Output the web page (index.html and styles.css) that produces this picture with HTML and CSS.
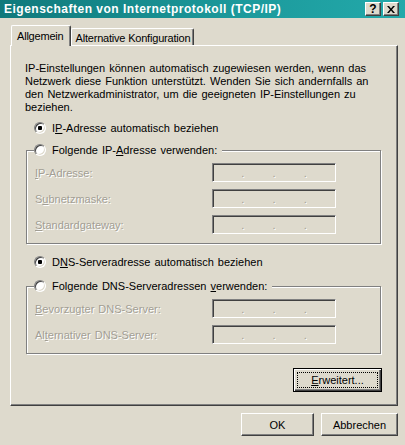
FILE: index.html
```html
<!DOCTYPE html>
<html>
	<head>
		<title>Eigenschaften von Internetprotokoll (TCP/IP)</title>
		<link rel="stylesheet" href="styles.css">
	</head>
	<body>
		<div class="window">
			<div class="titlebar">
				<span class="title">Eigenschaften von Internetprotokoll (TCP/IP)</span>
				<div class="caption-btns">
					<span class="cbtn help">?</span>
					<span class="cbtn close">
						<svg width="8" height="7" viewBox="0 0 8 7"><path d="M0 0h2l2 2.5L6 0h2L5 3.5 8 7H6L4 4.5 2 7H0l3-3.5z" fill="#000"/></svg>
					</span>
				</div>
			</div>
			<div class="client">
				<div class="tabs">
					<div class="tab active">Allgemein</div>
					<div class="tab">Alternative Konfiguration</div>
				</div>
				<div class="panel">
					<p class="intro">IP-Einstellungen können automatisch zugewiesen werden, wenn das<br>Netzwerk diese Funktion unterstützt. Wenden Sie sich andernfalls an<br>den Netzwerkadministrator, um die geeigneten IP-Einstellungen zu<br>beziehen.</p>
					<div class="option first"><span class="radio checked"></span><span>I<u>P</u>-Adresse automatisch beziehen</span></div>
					<fieldset class="group">
						<legend><span class="option"><span class="radio"></span><span>Folgende IP-<u>A</u>dresse verwenden:</span></span></legend>
						<div class="field"><span class="lbl"><u>I</u>P-Adresse:</span><span class="ipbox"><i>.</i><i>.</i><i>.</i></span></div>
						<div class="field"><span class="lbl">S<u>u</u>bnetzmaske:</span><span class="ipbox"><i>.</i><i>.</i><i>.</i></span></div>
						<div class="field"><span class="lbl"><u>S</u>tandardgateway:</span><span class="ipbox"><i>.</i><i>.</i><i>.</i></span></div>
					</fieldset>
					<div class="option second"><span class="radio checked"></span><span>D<u>N</u>S-Serveradresse automatisch beziehen</span></div>
					<fieldset class="group dns">
						<legend><span class="option"><span class="radio"></span><span>Folgende DNS-Serveradressen <u>v</u>erwenden:</span></span></legend>
						<div class="field"><span class="lbl"><u>B</u>evorzugter DNS-Server:</span><span class="ipbox"><i>.</i><i>.</i><i>.</i></span></div>
						<div class="field"><span class="lbl">Al<u>t</u>ernativer DNS-Server:</span><span class="ipbox"><i>.</i><i>.</i><i>.</i></span></div>
					</fieldset>
					<div class="panel-foot">
						<button class="btn default"><span class="focus"><span><u>E</u>rweitert...</span></span></button>
					</div>
				</div>
				<div class="dialog-btns">
					<button class="btn ok">OK</button>
					<button class="btn cancel">Abbrechen</button>
				</div>
			</div>
		</div>
	</body>
</html>
```
FILE: styles.css
```css
body {margin:0;background-color:#dedacd;font-family:"Liberation Sans",Arial,sans-serif;font-size:11px;color:#000;}
.window {width:405px;height:445px;display:flex;flex-direction:column;}

/* title bar */
.titlebar {height:18px;display:flex;align-items:center;justify-content:space-between;background:linear-gradient(to right,#10797b,#1c9a9c 60%,#23a9aa);padding-left:4px;}
.title {color:#fff;font-weight:bold;font-size:12px;letter-spacing:0.5px;}
.caption-btns {display:flex;gap:2px;margin-right:6px;}
.cbtn {width:14px;height:12px;display:flex;align-items:center;justify-content:center;background-color:#dedacd;border:1px solid;border-color:#fff #404040 #404040 #fff;box-shadow:inset -1px -1px 0 #808080;font-weight:bold;font-size:12px;line-height:12px;}

/* client area */
.client {display:flex;flex-direction:column;padding:0 7px 0 10px;}
.tabs {display:flex;align-items:flex-end;margin-top:7px;padding-left:1px;}
.tab {height:17px;padding:2px 3px 0 4px;box-sizing:border-box;line-height:14px;letter-spacing:-0.2px;border-top:1px solid #fff;border-left:1px solid #fff;border-right:1px solid #404040;box-shadow:inset -1px 0 0 #808080;border-radius:2px 2px 0 0;white-space:nowrap;}
.tab.active {height:21px;margin-bottom:-1px;padding:3px 6px 0 5px;background-color:#dedacd;position:relative;z-index:1;}
.panel {height:361px;box-sizing:border-box;display:flex;flex-direction:column;padding:0 14px 13px 14px;word-spacing:1px;border-top:1px solid #fff;border-left:1px solid #fff;border-right:1px solid #404040;border-bottom:1px solid #404040;box-shadow:inset -1px -1px 0 #808080;}
.intro {margin:16px 0 0 0;line-height:13px;white-space:nowrap;}

/* radio options */
.option {display:flex;align-items:center;line-height:14px;white-space:nowrap;}
.option.first {margin:7px 0 0 9px;}
.option.second {margin:11px 0 0 9px;}
.radio {width:12px;height:12px;box-sizing:border-box;margin-right:6px;border-radius:50%;border:1px solid;border-color:#808080 #fff #fff #808080;background-color:#fff;box-shadow:inset 1px 1px 0 #404040,inset -1px -1px 0 #dedacd;}
.radio.checked {background:radial-gradient(circle,#000 0,#000 2px,#fff 2.5px);}

/* group boxes */
.group {margin:8px 2px 0 1px;padding:6px 8px 9px 8px;border:1px solid #808080;box-shadow:inset 1px 1px 0 #fff,1px 1px 0 #fff;}
.group.dns {margin-top:10px;}
.group legend {padding:0 5px 0 0;margin-left:-1px;background-color:#dedacd;}
.field {display:flex;align-items:center;height:19px;}
.field + .field {margin-top:7px;}
.lbl {width:177px;color:#a29e94;text-shadow:1px 1px 0 #fff;}
.ipbox {width:124px;height:19px;box-sizing:border-box;display:flex;justify-content:space-evenly;align-items:flex-end;border:1px solid;border-color:#808080 #fff #fff #808080;box-shadow:inset 1px 1px 0 #404040,inset -1px -1px 0 #dedacd;}
.ipbox i {font-style:normal;color:#a29e94;text-shadow:1px 1px 0 #fff;line-height:15px;}

/* buttons */
.btn {font-family:inherit;font-size:11px;color:#000;height:23px;padding:0;background-color:#dedacd;border:1px solid;border-color:#fff #404040 #404040 #fff;box-shadow:inset -1px -1px 0 #808080;}
.panel-foot {margin-top:auto;display:flex;justify-content:flex-end;padding-right:1px;}
.btn.default {width:89px;height:24px;border:1px solid #000;box-shadow:inset 1px 1px 0 #fff,inset -1px -1px 0 #404040,inset -2px -2px 0 #808080;padding:3px;}
.focus {display:flex;align-items:center;justify-content:center;height:100%;box-sizing:border-box;border:1px dotted #000;}
.dialog-btns {display:flex;justify-content:flex-end;gap:7px;margin-top:7px;}
.btn.ok {width:73px;}
.btn.cancel {width:77px;}
```
